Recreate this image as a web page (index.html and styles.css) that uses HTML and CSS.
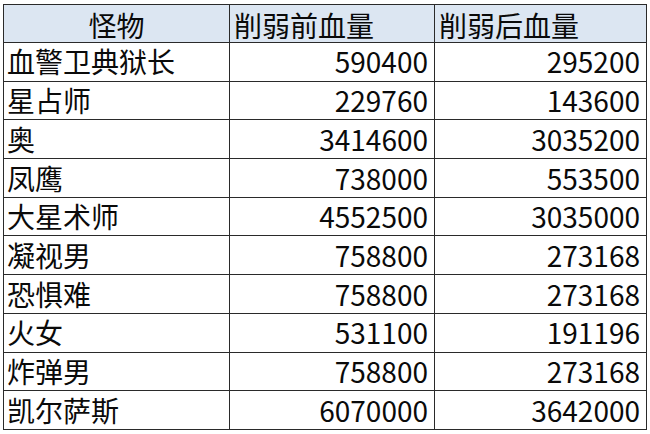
FILE: index.html
```html
<!DOCTYPE html>
<html lang="zh">
<head>
<meta charset="utf-8">
<link rel="stylesheet" href="styles.css">
</head>
<body>
<div class="sheet">
<table class="hp-table">
  <colgroup>
    <col class="c-name">
    <col class="c-before">
    <col class="c-after">
  </colgroup>
  <thead>
    <tr class="head-row">
      <th class="h-center">怪物</th>
      <th class="h-left">削弱前血量</th>
      <th class="h-left">削弱后血量</th>
    </tr>
  </thead>
  <tbody>
    <tr><td class="name">血警卫典狱长</td><td class="num">590400</td><td class="num">295200</td></tr>
    <tr><td class="name">星占师</td><td class="num">229760</td><td class="num">143600</td></tr>
    <tr><td class="name">奥</td><td class="num">3414600</td><td class="num">3035200</td></tr>
    <tr><td class="name">凤鹰</td><td class="num">738000</td><td class="num">553500</td></tr>
    <tr><td class="name">大星术师</td><td class="num">4552500</td><td class="num">3035000</td></tr>
    <tr><td class="name">凝视男</td><td class="num">758800</td><td class="num">273168</td></tr>
    <tr><td class="name">恐惧难</td><td class="num">758800</td><td class="num">273168</td></tr>
    <tr><td class="name">火女</td><td class="num">531100</td><td class="num">191196</td></tr>
    <tr><td class="name">炸弹男</td><td class="num">758800</td><td class="num">273168</td></tr>
    <tr><td class="name">凯尔萨斯</td><td class="num">6070000</td><td class="num">3642000</td></tr>
  </tbody>
</table>
</div>
</body>
</html>
```
FILE: styles.css
```css
html, body {
  margin: 0;
  padding: 0;
  background: #ffffff;
}

.sheet {
  padding: 4px 0 0 3px;
  width: 650px;
  height: 434px;
  box-sizing: border-box;
  overflow: hidden;
}

.hp-table {
  border-collapse: collapse;
  table-layout: fixed;
  width: 643px;
  font-family: "Noto Sans CJK SC", "Noto Sans", sans-serif;
  font-size: 28px;
  color: #0a0a0a;
}

.c-name { width: 226px; }
.c-before { width: 205px; }
.c-after { width: 212px; }

.hp-table th,
.hp-table td {
  border: 1px solid #2a2a2a;
  padding: 0;
  line-height: 1.1;
  font-weight: normal;
  white-space: nowrap;
  vertical-align: middle;
}

.hp-table .head-row th {
  background: #dce6f2;
  height: 34px;
  padding-top: 3px;
}

.hp-table th.h-center {
  text-align: center;
}

.hp-table th.h-left {
  text-align: left;
  padding-left: 4px;
}

.hp-table tbody td {
  height: 37.7px;
}

.hp-table td.name {
  text-align: left;
  padding-left: 3px;
}

.hp-table td.num {
  text-align: right;
  padding-right: 6px;
}
```
